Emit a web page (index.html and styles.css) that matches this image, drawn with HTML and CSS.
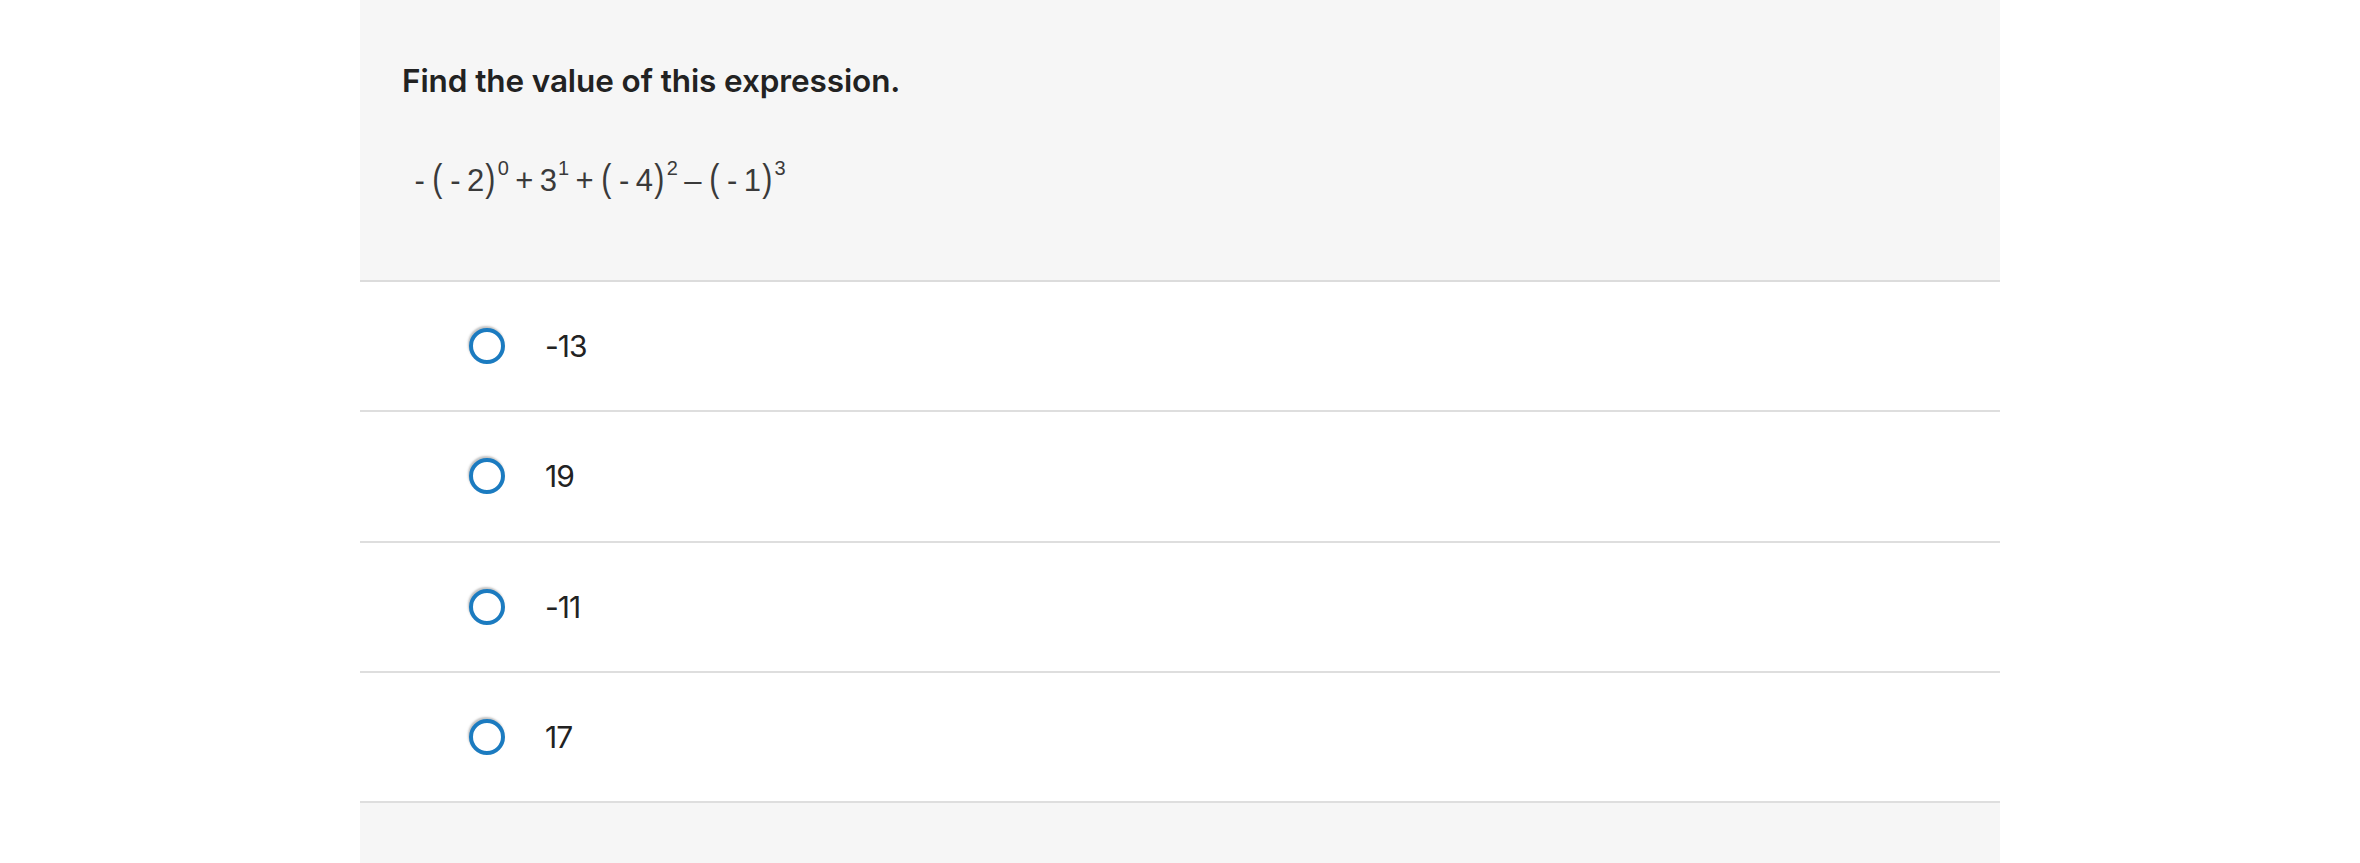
FILE: index.html
```html
<!DOCTYPE html>
<html lang="en">
<head>
<meta charset="utf-8">
<title>Question</title>
<link rel="stylesheet" href="styles.css">
</head>
<body>
<main class="question">
  <section class="prompt">
    <h1 class="prompt-title">Find the value of this expression.</h1>
    <div class="expr">
      <span class="op">-</span><span class="par">(</span><span class="op">-</span>2<span class="par">)</span><sup>0</sup><span class="op">+</span>3<sup>1</sup><span class="op">+</span><span class="par">(</span><span class="op">-</span>4<span class="par">)</span><sup>2</sup><span class="op">–</span><span class="par">(</span><span class="op">-</span>1<span class="par">)</span><sup>3</sup>
    </div>
  </section>
  <ul class="choices">
    <li class="choice"><span class="radio"></span><span class="choice-label">-13</span></li>
    <li class="choice"><span class="radio"></span><span class="choice-label">19</span></li>
    <li class="choice"><span class="radio"></span><span class="choice-label">-11</span></li>
    <li class="choice"><span class="radio"></span><span class="choice-label">17</span></li>
  </ul>
  <div class="footer-band"></div>
</main>
</body>
</html>
```

FILE: styles.css
```css
* { box-sizing: border-box; }
html, body {
  margin: 0;
  padding: 0;
  background: #ffffff;
}
body {
  font-family: Inter, "Open Sans", "Liberation Sans", sans-serif;
  color: #222222;
}
.question {
  width: 1640px;
  margin: 0 auto;
}
.prompt {
  background: #f6f6f6;
  height: 282px;
  border-bottom: 2px solid #dcdcdc;
  padding: 61px 42px 0 42px;
}
.prompt-title {
  margin: 0;
  font-size: 31.5px;
  line-height: 40px;
  font-weight: 600;
  color: #222222;
  letter-spacing: -0.1px;
}
.expr {
  margin-top: 55px;
  margin-left: 6px;
  font-family: "Liberation Sans", Arial, sans-serif;
  font-size: 31px;
  line-height: 44px;
  color: #3a3a3a;
  white-space: nowrap;
}
.expr .op {
  margin: 0 6.4px;
}
.expr .par {
  font-size: 38px;
  display: inline-block;
  transform: scaleX(0.8);
}
.expr sup {
  font-family: "Liberation Sans", Arial, sans-serif;
  font-size: 20px;
  vertical-align: 16px;
  line-height: 0;
  margin-left: 1px;
}
.choices {
  list-style: none;
  margin: 0;
  padding: 0;
}
.choice {
  height: 130.3px;
  border-bottom: 2px solid #dedede;
  display: flex;
  align-items: center;
  padding-left: 109px;
  gap: 40px;
}
.radio {
  width: 36px;
  height: 36px;
  border-radius: 50%;
  border: 4px solid #1b7bc0;
  background: #ffffff;
  box-shadow: -1px -2px 2px rgba(80, 80, 80, 0.35);
  flex: none;
}
.choice-label {
  font-size: 30px;
  font-weight: 400;
  line-height: 40px;
  color: #222222;
  letter-spacing: -1px;
}
.footer-band {
  background: #f6f6f6;
  height: 60px;
}
```
